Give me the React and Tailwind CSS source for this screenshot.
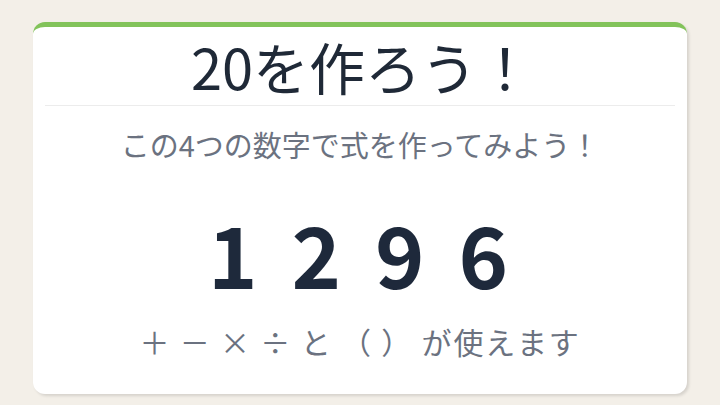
import React from 'react';

const numbers = [1, 2, 9, 6];

export default function App() {
  return (
    <div
      className="w-[720px] h-[405px] bg-[#f3efe8] pt-[22px] px-[33px] overflow-hidden"
      style={{ fontFamily: '"Noto Sans CJK JP", "Noto Sans", sans-serif' }}
    >
      <div className="h-[372px] bg-white rounded-[12px] border-t-[5px] border-[#82c35a] shadow-[2px_2px_3px_rgba(0,0,0,0.12)] flex flex-col">
        <div className="mx-3 h-[79px] border-b border-[#ececec] flex items-center justify-center">
          <h1 className="text-[56px] leading-none text-[#1f2937] pl-1">20を作ろう！</h1>
        </div>
        <p className="mt-[24px] text-center text-[29px] leading-none text-[#6b7280]">
          この4つの数字で式を作ってみよう！
        </p>
        <div className="mt-[52px] flex justify-center gap-[34px] text-[84px] leading-none font-bold text-[#1e293b] pr-1">
          {numbers.map((n, i) => (
            <span key={i}>{n}</span>
          ))}
        </div>
        <p className="mt-[31px] text-center text-[30px] leading-none text-[#6b7280] tracking-[1.8px]">
          ＋ － × ÷ と （ ） が使えます
        </p>
      </div>
    </div>
  );
}
